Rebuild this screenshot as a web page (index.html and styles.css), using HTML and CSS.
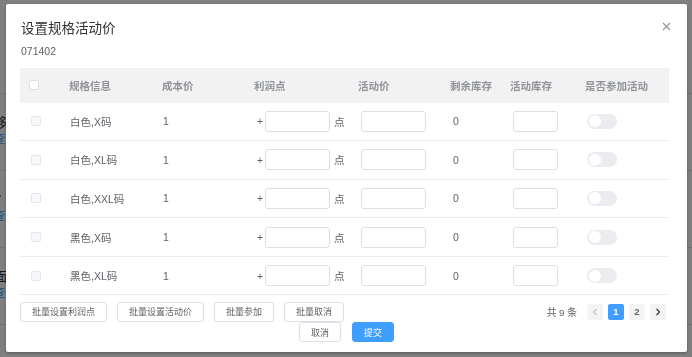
FILE: index.html
```
<!DOCTYPE HTML>
<html>
    <head>
        <meta charset="UTF-8">
        <title>设置规格活动价</title>
        <link rel="stylesheet" href="styles.css">
    </head>
    <body>
        <div class="page">
            <div class="page-row"></div>
            <div class="page-row"><p class="p-name">移</p><p class="p-link">查</p></div>
            <div class="page-row"><p class="p-name">7</p><p class="p-link">查</p></div>
            <div class="page-row"><p class="p-name">面</p><p class="p-link">查</p></div>
        </div>

        <div class="mask">
            <div class="dialog">
                <div class="dlg-head">
                    <span class="dlg-title">设置规格活动价</span>
                    <svg class="dlg-close" width="9" height="9" viewBox="0 0 9 9"><path d="M1 1L8 8M8 1L1 8" stroke="#909399" stroke-width="1.1" fill="none"/></svg>
                    <p class="dlg-code">071402</p>
                </div>
                <div class="dlg-body">
                    <div class="tbl">
                        <div class="tr th">
                            <div class="c c-chk"><span class="chk"></span></div>
                            <div class="c">规格信息</div>
                            <div class="c">成本价</div>
                            <div class="c">利润点</div>
                            <div class="c">活动价</div>
                            <div class="c">剩余库存</div>
                            <div class="c">活动库存</div>
                            <div class="c">是否参加活动</div>
                        </div>
                        <div class="tr">
                            <div class="c c-chk"><span class="chk dis"></span></div>
                            <div class="c t">白色,X码</div>
                            <div class="c t">1</div>
                            <div class="c ctl"><span class="plus">+</span><span class="ipt"></span><span class="unit">点</span></div>
                            <div class="c ctl"><span class="ipt"></span></div>
                            <div class="c ctl">0</div>
                            <div class="c ctl"><span class="ipt sm"></span></div>
                            <div class="c sw-c"><span class="switch"></span></div>
                        </div>
                        <div class="tr">
                            <div class="c c-chk"><span class="chk dis"></span></div>
                            <div class="c t">白色,XL码</div>
                            <div class="c t">1</div>
                            <div class="c ctl"><span class="plus">+</span><span class="ipt"></span><span class="unit">点</span></div>
                            <div class="c ctl"><span class="ipt"></span></div>
                            <div class="c ctl">0</div>
                            <div class="c ctl"><span class="ipt sm"></span></div>
                            <div class="c sw-c"><span class="switch"></span></div>
                        </div>
                        <div class="tr">
                            <div class="c c-chk"><span class="chk dis"></span></div>
                            <div class="c t">白色,XXL码</div>
                            <div class="c t">1</div>
                            <div class="c ctl"><span class="plus">+</span><span class="ipt"></span><span class="unit">点</span></div>
                            <div class="c ctl"><span class="ipt"></span></div>
                            <div class="c ctl">0</div>
                            <div class="c ctl"><span class="ipt sm"></span></div>
                            <div class="c sw-c"><span class="switch"></span></div>
                        </div>
                        <div class="tr">
                            <div class="c c-chk"><span class="chk dis"></span></div>
                            <div class="c t">黑色,X码</div>
                            <div class="c t">1</div>
                            <div class="c ctl"><span class="plus">+</span><span class="ipt"></span><span class="unit">点</span></div>
                            <div class="c ctl"><span class="ipt"></span></div>
                            <div class="c ctl">0</div>
                            <div class="c ctl"><span class="ipt sm"></span></div>
                            <div class="c sw-c"><span class="switch"></span></div>
                        </div>
                        <div class="tr">
                            <div class="c c-chk"><span class="chk dis"></span></div>
                            <div class="c t">黑色,XL码</div>
                            <div class="c t">1</div>
                            <div class="c ctl"><span class="plus">+</span><span class="ipt"></span><span class="unit">点</span></div>
                            <div class="c ctl"><span class="ipt"></span></div>
                            <div class="c ctl">0</div>
                            <div class="c ctl"><span class="ipt sm"></span></div>
                            <div class="c sw-c"><span class="switch"></span></div>
                        </div>
                    </div>

                    <div class="batch">
                        <div class="btns">
                            <span class="btn">批量设置利润点</span>
                            <span class="btn">批量设置活动价</span>
                            <span class="btn">批量参加</span>
                            <span class="btn">批量取消</span>
                        </div>
                        <div class="pager">
                            <span class="total">共 9 条</span>
                            <span class="pg dim"><svg width="6" height="8" viewBox="0 0 6 8"><path d="M4.5 1L1.5 4L4.5 7" stroke="#c0c4cc" stroke-width="1.1" fill="none"/></svg></span>
                            <span class="pg on">1</span>
                            <span class="pg">2</span>
                            <span class="pg"><svg width="6" height="8" viewBox="0 0 6 8"><path d="M1.5 1L4.5 4L1.5 7" stroke="#303133" stroke-width="1.1" fill="none"/></svg></span>
                        </div>
                    </div>
                </div>
                <div class="dlg-foot">
                    <span class="btn">取消</span>
                    <span class="btn primary">提交</span>
                </div>
            </div>
        </div>
    </body>
</html>
```

FILE: styles.css
```
body{margin:0;font-family:"Liberation Sans","Noto Sans CJK SC",sans-serif;background:#fff;}
p{margin:0;}

/* 底层页面,只露出左边一点 */
.page{padding-top:16px;}
.page-row{height:77px;border-bottom:1px solid #dcdfe6;padding-top:20px;box-sizing:border-box;}
.page-row:first-child{height:78px;padding:0;}
.p-name{font-size:13px;line-height:17px;color:#303133;margin-left:-6px;}
.p-link{font-size:12px;line-height:17px;color:#409eff;margin-left:-7px;}

/* 遮罩和弹窗 */
.mask{position:fixed;top:0;left:0;right:0;bottom:0;background:rgba(0,0,0,.5);}
.dialog{
    width:681px;
    height:348px;
    margin:4px 0 0 6px;
    background:#fff;
    border-radius:2px;
    box-shadow:0 1px 3px rgba(0,0,0,.3);
    box-sizing:border-box;
    padding-bottom:10px;
    display:flex;
    flex-direction:column;
}
.dlg-head{position:relative;padding:15px 18px 0 15px;}
.dlg-title{display:block;font-size:13.5px;line-height:19px;color:#303133;}
.dlg-close{position:absolute;top:18px;right:16px;}
.dlg-code{margin-top:7px;font-size:10.5px;line-height:13px;color:#606266;}
.dlg-body{padding:9.5px 18px 0 14px;flex:1;}

/* 表格 */
.tbl{font-size:10.5px;color:#606266;}
.tr{
    display:grid;
    grid-template-columns:49px 93px 92px 104px 92px 60px 75px 1fr;
    align-items:center;
    height:38.6px;
    border-bottom:1px solid #ebeef5;
    box-sizing:border-box;
}
.tr.th{height:35px;background:#f2f2f2;border-bottom:none;color:#909399;font-weight:bold;}
.c{display:flex;align-items:center;white-space:nowrap;}
.c-chk{padding-left:11px;}
.th .c-chk{padding-left:9px;}
.t{padding-left:1px;}
.ctl{padding-left:3px;}
.sw-c{padding-left:2px;}
.chk{
    width:10px;
    height:10px;
    border:1px solid #dcdfe6;
    border-radius:2px;
    background:#fff;
    box-sizing:border-box;
}
.chk.dis{border-color:#e4e7ed;background:#f7f8fa;}
.plus{width:8px;}
.ipt{
    width:65px;
    height:21px;
    border:1px solid #dcdfe6;
    border-radius:3px;
    box-sizing:border-box;
    background:#fff;
}
.ipt.sm{width:45px;}
.unit{margin-left:4px;}
.switch{
    position:relative;
    width:30px;
    height:15px;
    border-radius:8px;
    background:#eaecf0;
}
.switch:after{
    content:"";
    position:absolute;
    top:1.5px;
    left:1.5px;
    width:12px;
    height:12px;
    border-radius:50%;
    background:#fff;
}

/* 底部批量操作 */
.batch{display:flex;justify-content:space-between;align-items:center;margin-top:6.5px;}
.btns{display:flex;gap:10px;}
.btn{
    display:inline-flex;
    align-items:center;
    height:20px;
    padding:0 11px;
    font-size:9px;
    color:#606266;
    border:1px solid #dcdfe6;
    border-radius:3px;
    background:#fff;
    box-sizing:border-box;
}
.btn.primary{background:#409eff;border-color:#409eff;color:#fff;}
.pager{display:flex;align-items:center;gap:5px;padding-right:3px;}
.total{font-size:9.75px;color:#606266;margin-right:5px;}
.pg{
    display:flex;
    align-items:center;
    justify-content:center;
    width:16px;
    height:16px;
    border-radius:2px;
    background:#f4f4f5;
    font-size:9.5px;
    font-weight:bold;
    color:#606266;
}
.pg.on{background:#409eff;color:#fff;}
.dlg-foot{display:flex;justify-content:center;gap:11px;}
```
